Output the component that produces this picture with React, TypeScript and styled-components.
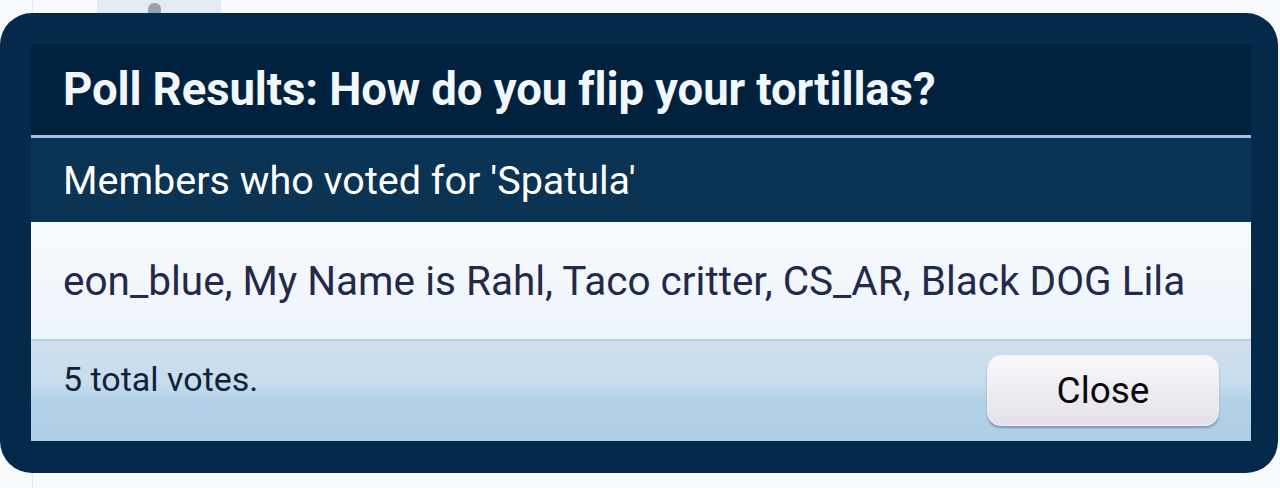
import styled, { createGlobalStyle } from 'styled-components';

const GlobalStyle = createGlobalStyle`
  html, body {
    margin: 0;
    padding: 0;
    background: #f8fbfd;
    font-family: Roboto, "Liberation Sans", Arial, sans-serif;
  }
`;

const Page = styled.div`
  position: relative;
  width: 1280px;
  height: 488px;
  overflow: hidden;
  display: flex;
  background: #f8fbfd;
`;

const Gutter = styled.div`
  width: 32px;
  border-right: 1px solid #e6ebf0;
`;

const Feed = styled.div`
  flex: 1;
  padding-left: 64px;
`;

const Tab = styled.div`
  width: 124px;
  height: 14px;
  background: #e2ebf3;
  display: flex;
  justify-content: center;
  padding-right: 10px;
  box-sizing: border-box;
`;

const Knob = styled.div`
  margin-top: 3px;
  width: 13px;
  height: 11px;
  border-radius: 6px 6px 0 0;
  background: #98a3ae;
`;

const Overlay = styled.div`
  position: absolute;
  top: 13px;
  left: 0;
  width: 1278px;
  height: 460px;
  box-sizing: border-box;
  padding: 31px 27px 32px 31px;
  background: #05294a;
  border-radius: 32px;
`;

const Dialog = styled.section`
  height: 100%;
  display: flex;
  flex-direction: column;
`;

const TitleBar = styled.h2`
  margin: 0;
  height: 91px;
  display: flex;
  align-items: center;
  padding: 0 32px;
  background: #01223f;
  color: #f2f7fc;
  font-size: 45.5px;
  font-weight: 700;
  letter-spacing: -0.1px;
  border-bottom: 3px solid #9cc4df;
`;

const SubHeader = styled.div`
  height: 84px;
  display: flex;
  align-items: center;
  padding: 0 32px;
  background: #0b3354;
  color: #ffffff;
  font-size: 39.5px;
`;

const Voters = styled.div`
  height: 117px;
  display: flex;
  align-items: center;
  padding: 0 32px;
  background: linear-gradient(180deg, #f7fafe 0%, #edf4fa 100%);
  color: #24294b;
  font-size: 40.5px;
  border-bottom: 2px solid #b4d0e6;
`;

const Footer = styled.div`
  flex: 1;
  display: flex;
  justify-content: space-between;
  align-items: flex-start;
  padding: 14px 32px 0 32px;
  background: linear-gradient(180deg, #cee0ef 0%, #c8dcec 40%, #b3d1e8 62%, #aecfe7 100%);
`;

const Total = styled.span`
  margin-top: 4px;
  color: #0f2239;
  font-size: 34px;
`;

const CloseButton = styled.button`
  width: 232px;
  height: 71px;
  border: 1px solid #f3f1f6;
  border-radius: 14px;
  background: linear-gradient(180deg, #faf8fb 0%, #e3e0e9 100%);
  box-shadow: 0 2px 2px rgba(70, 80, 100, 0.45);
  color: #0a0a0a;
  font-family: Roboto, "Liberation Sans", Arial, sans-serif;
  font-size: 37px;
  cursor: pointer;
`;

export default function App() {
  return (
    <>
      <GlobalStyle />
      <Page>
        <Gutter />
        <Feed>
          <Tab>
            <Knob />
          </Tab>
        </Feed>
        <Overlay>
          <Dialog role="dialog" aria-label="Poll Results">
            <TitleBar>Poll Results: How do you flip your tortillas?</TitleBar>
            <SubHeader>Members who voted for 'Spatula'</SubHeader>
            <Voters>eon_blue, My Name is Rahl, Taco critter, CS_AR, Black DOG Lila</Voters>
            <Footer>
              <Total>5 total votes.</Total>
              <CloseButton type="button">Close</CloseButton>
            </Footer>
          </Dialog>
        </Overlay>
      </Page>
    </>
  );
}
